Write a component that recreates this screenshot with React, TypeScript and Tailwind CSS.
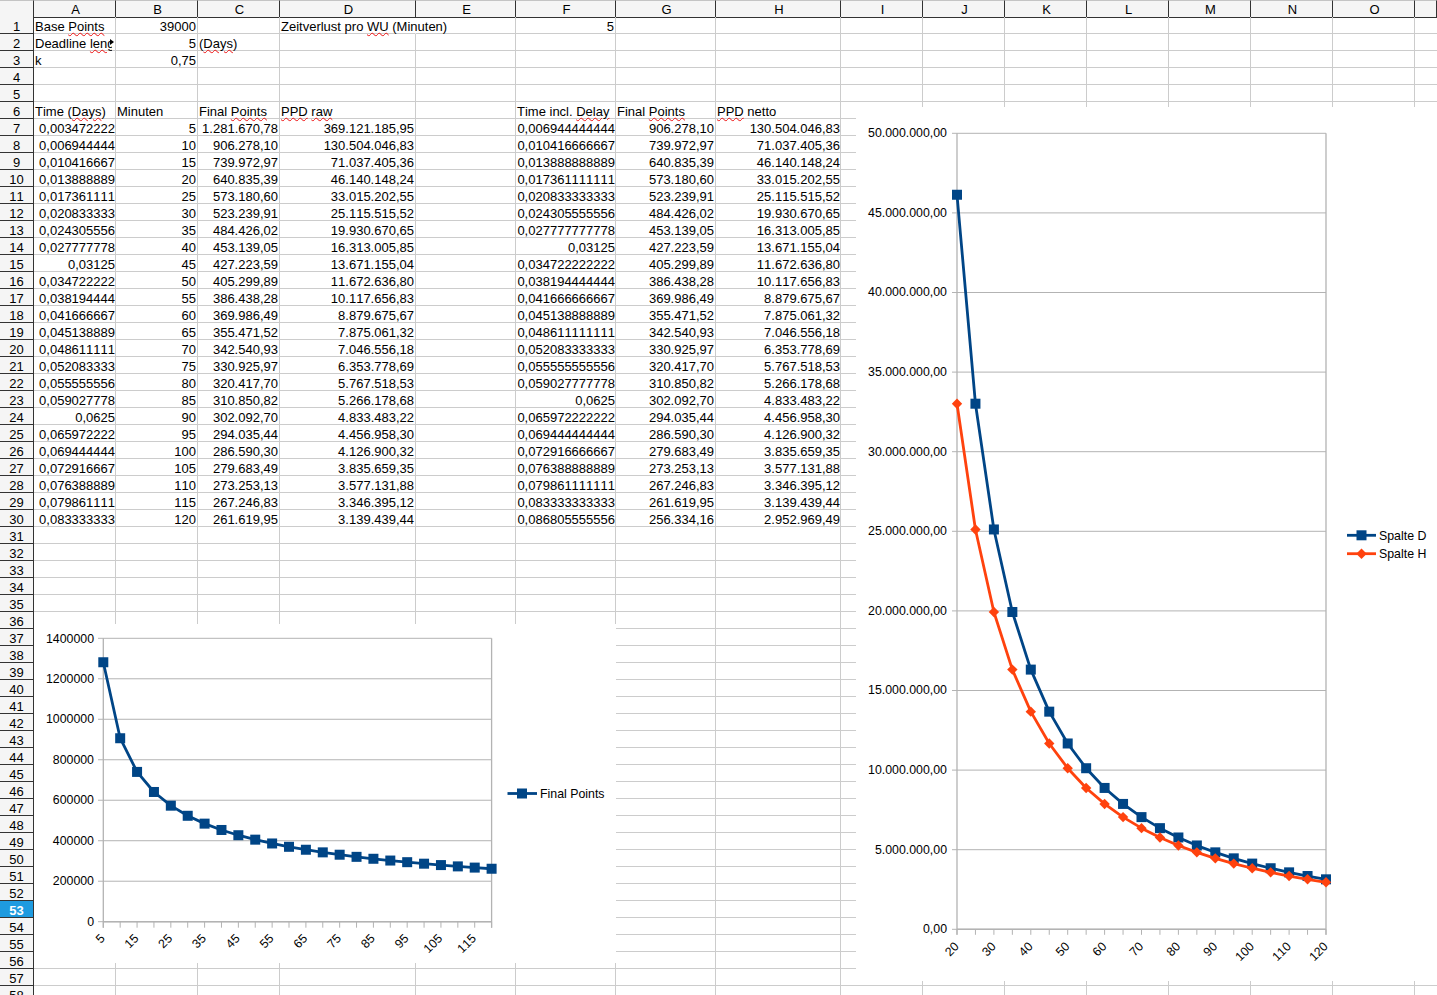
import React from "react";

const A = "0,003472222 0,006944444 0,010416667 0,013888889 0,017361111 0,020833333 0,024305556 0,027777778 0,03125 0,034722222 0,038194444 0,041666667 0,045138889 0,048611111 0,052083333 0,055555556 0,059027778 0,0625 0,065972222 0,069444444 0,072916667 0,076388889 0,079861111 0,083333333".split(" ");
const C = "1.281.670,78 906.278,10 739.972,97 640.835,39 573.180,60 523.239,91 484.426,02 453.139,05 427.223,59 405.299,89 386.438,28 369.986,49 355.471,52 342.540,93 330.925,97 320.417,70 310.850,82 302.092,70 294.035,44 286.590,30 279.683,49 273.253,13 267.246,83 261.619,95 256.334,16".split(" ");
const D = "369.121.185,95 130.504.046,83 71.037.405,36 46.140.148,24 33.015.202,55 25.115.515,52 19.930.670,65 16.313.005,85 13.671.155,04 11.672.636,80 10.117.656,83 8.879.675,67 7.875.061,32 7.046.556,18 6.353.778,69 5.767.518,53 5.266.178,68 4.833.483,22 4.456.958,30 4.126.900,32 3.835.659,35 3.577.131,88 3.346.395,12 3.139.439,44 2.952.969,49".split(" ");
const F = "0,006944444444 0,010416666667 0,013888888889 0,017361111111 0,020833333333 0,024305555556 0,027777777778 0,03125 0,034722222222 0,038194444444 0,041666666667 0,045138888889 0,048611111111 0,052083333333 0,055555555556 0,059027777778 0,0625 0,065972222222 0,069444444444 0,072916666667 0,076388888889 0,079861111111 0,083333333333 0,086805555556".split(" ");

const num = (s: string) => parseFloat(s.replace(/\./g, "").replace(",", "."));
const LETTERS = ["A", "B", "C", "D", "E", "F", "G", "H", "I", "J", "K", "L", "M", "N", "O", ""];

const W = ({ children }: { children: React.ReactNode }) => (
  <span className="underline decoration-wavy decoration-[#ee1111] decoration-[1px] underline-offset-[1px]">{children}</span>
);

const L = "flex items-center justify-start pl-px pt-[2px]";
const R = "flex items-center justify-end pr-px pt-[2px]";
const R0 = "flex items-center justify-end pr-0 pt-[2px]";
const GRID = "h-[17px] overflow-x-clip overflow-y-visible whitespace-nowrap border-r border-b border-[#cccccc] relative leading-[17px] text-black";

function cellContent(row: number, col: number): { node?: React.ReactNode; right?: boolean } {
  if (row === 1) {
    if (col === 0) return { node: <>Base <W>Points</W></> };
    if (col === 1) return { node: "39000", right: true };
    if (col === 3) return { node: <>Zeitverlust pro <W>WU</W> (Minuten)</> };
    if (col === 5) return { node: "5", right: true };
  }
  if (row === 2) {
    if (col === 0) return {
      node: (
        <span className="block w-[77px] overflow-x-clip overflow-y-visible">
          Deadline <W>length</W>
        </span>
      ),
    };
    if (col === 1) return { node: "5", right: true };
    if (col === 2) return { node: <>(<W>Days</W>)</> };
  }
  if (row === 3) {
    if (col === 0) return { node: "k" };
    if (col === 1) return { node: "0,75", right: true };
  }
  if (row === 6) {
    if (col === 0) return { node: <>Time (<W>Days</W>)</> };
    if (col === 1) return { node: "Minuten" };
    if (col === 2 || col === 6) return { node: <>Final <W>Points</W></> };
    if (col === 3) return { node: <><W>PPD</W> <W>raw</W></> };
    if (col === 5) return { node: <>Time incl. <W>Delay</W></> };
    if (col === 7) return { node: <><W>PPD</W> netto</> };
  }
  if (row >= 7 && row <= 30) {
    const i = row - 7;
    const values = [A[i], String((i + 1) * 5), C[i], D[i], "", F[i], C[i + 1], D[i + 1]];
    if (col < 8 && values[col]) return { node: values[col], right: true };
  }
  return {};
}

function Cell({ row, col }: { row: number; col: number }) {
  const { node, right } = cellContent(row, col);
  const overflow = row === 1 && col === 3;
  const flush = row >= 7 && row <= 30 && (col === 0 || col === 5 || col === 7);
  return (
    <div className={`${GRID} ${right ? (flush ? R0 : R) : L} ${overflow ? "overflow-x-visible border-r-transparent z-10" : ""} ${col === 15 ? "border-r-0" : ""}`}>
      {node !== undefined && <span className="shrink-0">{node}</span>}
      {row === 2 && col === 0 && (
        <span className="absolute right-[1px] top-[5px] w-0 h-0 border-y-[3px] border-l-[4px] border-y-transparent border-l-black" />
      )}
    </div>
  );
}

const BLUE = "#004586";
const ORANGE = "#ff420e";
const AXIS = "#b3b3b3";
const FONT = "'Liberation Sans', sans-serif";
const path = (pts: number[][]) => pts.map((p, i) => `${i ? "L" : "M"}${p[0].toFixed(2)} ${p[1].toFixed(2)}`).join(" ");

const Square = ({ x, y }: { x: number; y: number }) => <rect x={x - 5} y={y - 5} width={10} height={10} fill={BLUE} />;
const Diamond = ({ x, y }: { x: number; y: number }) => (
  <path d={`M${x - 5.2} ${y} L${x} ${y - 5.2} L${x + 5.2} ${y} L${x} ${y + 5.2} Z`} fill={ORANGE} />
);

function Chart1() {
  const x0 = 103.3, x1 = 491.6, yTop = 638.3, yBot = 921.7;
  const step = (x1 - x0) / 23;
  const yOf = (v: number) => yBot - (v / 1400000) * (yBot - yTop);
  const pts = C.slice(0, 24).map((s, i) => [x0 + i * step, yOf(num(s))]);
  return (
    <svg className="absolute left-[34px] top-[624px] bg-white z-20" width={582} height={339} viewBox="34 624 582 339">
      {[0, 1, 2, 3, 4, 5, 6, 7].map((k) => {
        const v = k * 200000, y = yOf(v);
        return (
          <g key={k}>
            <line x1={98} x2={x1} y1={y} y2={y} stroke={AXIS} strokeWidth={1} />
            <text x={94} y={y + 4.2} textAnchor="end" fontFamily={FONT} fontSize={12.35} fill="#000">{v}</text>
          </g>
        );
      })}
      <line x1={x0} x2={x0} y1={yTop} y2={yBot + 6} stroke={AXIS} strokeWidth={1.3} />
      <line x1={x1} x2={x1} y1={yTop} y2={yBot + 6} stroke={AXIS} strokeWidth={1.3} />
      <line x1={x0} x2={x1} y1={yBot} y2={yBot} stroke={AXIS} strokeWidth={1.5} />
      {Array.from({ length: 24 }, (_, i) => (
        <line key={i} x1={x0 + i * step} x2={x0 + i * step} y1={yBot} y2={yBot + 6} stroke={AXIS} strokeWidth={1} />
      ))}
      {Array.from({ length: 12 }, (_, i) => {
        const x = x0 + 2 * i * step;
        return (
          <text key={i} transform={`translate(${x - 4} 933) rotate(-45)`} textAnchor="end" dominantBaseline="hanging" fontFamily={FONT} fontSize={12.35} fill="#000">
            {5 + i * 10}
          </text>
        );
      })}
      <path d={path(pts)} fill="none" stroke={BLUE} strokeWidth={2.8} strokeLinejoin="round" />
      {pts.map((p, i) => <Square key={i} x={p[0]} y={p[1]} />)}
      <line x1={507.5} x2={537} y1={793.5} y2={793.5} stroke={BLUE} strokeWidth={2.8} />
      <Square x={522} y={793.5} />
      <text x={540} y={798} fontFamily={FONT} fontSize={12.35} fill="#000">Final Points</text>
    </svg>
  );
}

function Chart2() {
  const x0 = 957, x1 = 1326, yTop = 133.3, yBot = 929.3;
  const step = (x1 - x0) / 20;
  const yOf = (v: number) => yBot - (v / 50000000) * (yBot - yTop);
  const labels = ["0,00", "5.000.000,00", "10.000.000,00", "15.000.000,00", "20.000.000,00", "25.000.000,00", "30.000.000,00", "35.000.000,00", "40.000.000,00", "45.000.000,00", "50.000.000,00"];
  const ptsD = D.slice(3, 24).map((s, i) => [x0 + i * step, yOf(num(s))]);
  const ptsH = D.slice(4, 25).map((s, i) => [x0 + i * step, yOf(num(s))]);
  return (
    <svg className="absolute left-[856px] top-[107px] bg-white z-20" width={581} height={874} viewBox="856 107 581 874">
      {labels.map((t, k) => {
        const y = yOf(k * 5000000);
        return (
          <g key={t}>
            <line x1={952} x2={x1} y1={y} y2={y} stroke={AXIS} strokeWidth={1} />
            <text x={947} y={y + 3.9} textAnchor="end" fontFamily={FONT} fontSize={12.35} fill="#000">{t}</text>
          </g>
        );
      })}
      <line x1={x0} x2={x0} y1={yTop} y2={yBot + 5.5} stroke={AXIS} strokeWidth={1.3} />
      <line x1={x1} x2={x1} y1={yTop} y2={yBot + 5.5} stroke={AXIS} strokeWidth={1.3} />
      <line x1={x0} x2={x1} y1={yBot} y2={yBot} stroke={AXIS} strokeWidth={1.5} />
      {Array.from({ length: 21 }, (_, i) => (
        <line key={i} x1={x0 + i * step} x2={x0 + i * step} y1={yBot} y2={yBot + 5.5} stroke={AXIS} strokeWidth={1} />
      ))}
      {Array.from({ length: 11 }, (_, i) => {
        const x = x0 + 2 * i * step;
        return (
          <text key={i} transform={`translate(${x - 3.5} 941) rotate(-45)`} textAnchor="end" dominantBaseline="hanging" fontFamily={FONT} fontSize={12.35} fill="#000">
            {20 + i * 10}
          </text>
        );
      })}
      <path d={path(ptsD)} fill="none" stroke={BLUE} strokeWidth={2.8} strokeLinejoin="round" />
      {ptsD.map((p, i) => <Square key={i} x={p[0]} y={p[1]} />)}
      <path d={path(ptsH)} fill="none" stroke={ORANGE} strokeWidth={2.8} strokeLinejoin="round" />
      {ptsH.map((p, i) => <Diamond key={i} x={p[0]} y={p[1]} />)}
      <line x1={1347} x2={1376} y1={535.3} y2={535.3} stroke={BLUE} strokeWidth={2.8} />
      <Square x={1361.5} y={535.3} />
      <text x={1379} y={540} fontFamily={FONT} fontSize={12.35} fill="#000">Spalte D</text>
      <line x1={1347} x2={1376} y1={553.7} y2={553.7} stroke={ORANGE} strokeWidth={2.8} />
      <Diamond x={1361.5} y={553.7} />
      <text x={1379} y={558} fontFamily={FONT} fontSize={12.35} fill="#000">Spalte H</text>
    </svg>
  );
}

export default function App() {
  const rows = Array.from({ length: 58 }, (_, i) => i + 1);
  return (
    <div className="relative w-[1437px] h-[995px] overflow-hidden bg-white font-['Liberation_Sans',sans-serif] text-[13px] [font-kerning:none]">
      <div className="grid grid-cols-[34px_82px_82px_82px_136px_100px_100px_100px_125px_82px_82px_82px_82px_82px_82px_82px_1fr] auto-rows-[17px]">
        <div className="h-[18px] -mb-px bg-[#f5f5f5] border-t border-r border-b border-r-[#333333] border-b-[#333333] border-t-[#c4c4c4]" />
        {LETTERS.map((l, i) => (
          <div key={i} className="h-[18px] -mb-px pl-[2px] pt-[2px] bg-[#f5f5f5] border-t border-t-[#c4c4c4] border-r border-b border-r-[#333333] border-b-[#333333] flex items-center justify-center text-black">
            {l}
          </div>
        ))}
        {rows.map((r) => (
          <React.Fragment key={r}>
            <div className={r === 53
              ? "h-[17px] pt-[2px] bg-[#1e9be0] border-r border-b border-[#333333] flex items-center justify-center text-white font-bold leading-[17px]"
              : "h-[17px] pt-[2px] bg-[#f5f5f5] border-r border-b border-[#333333] flex items-center justify-center text-black leading-[17px]"}>
              {r}
            </div>
            {LETTERS.map((_, c) => <Cell key={c} row={r} col={c} />)}
          </React.Fragment>
        ))}
      </div>
      <Chart1 />
      <Chart2 />
    </div>
  );
}
